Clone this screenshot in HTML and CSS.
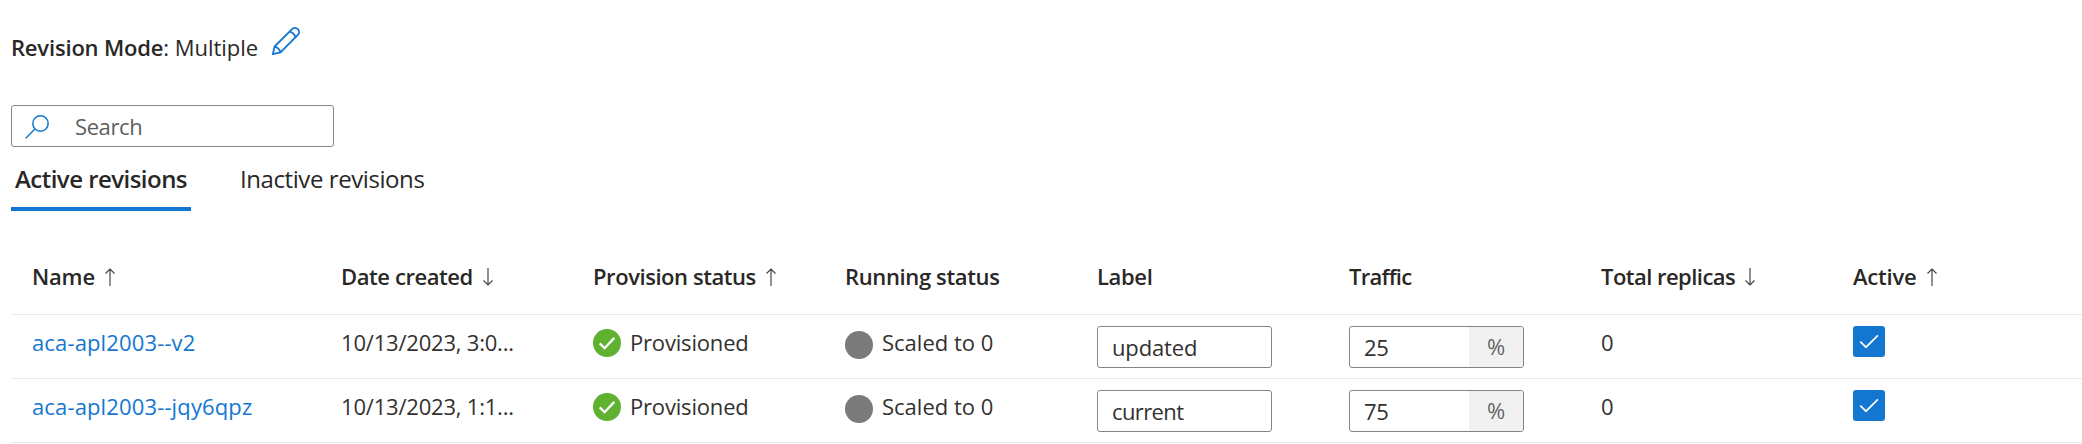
FILE: index.html
```html
<!DOCTYPE html>
<html lang="en">
<head>
<meta charset="utf-8">
<title>Revisions</title>
<link rel="stylesheet" href="styles.css">
</head>
<body>
<svg class="defs" aria-hidden="true">
  <symbol id="up" viewBox="0 0 10 18"><path d="M5 18V1M.5 5.500 5 1l4.500 4.500"/></symbol>
  <symbol id="down" viewBox="0 0 10 18"><path d="M5 0v17M.5 12.500 5 17l4.500-4.500"/></symbol>
  <symbol id="ok" viewBox="0 0 28 28"><circle cx="14" cy="14" r="14" fill="#5fb130"/><path d="M6.700 14.400l4.900 4.800L21.300 8.900" fill="none" stroke="#fff" stroke-width="2.300"/></symbol>
  <symbol id="check" viewBox="0 0 32 31"><path d="M7.300 15.600l5.700 5.600L24.900 9.400" fill="none" stroke="#fff" stroke-width="1.700"/></symbol>
</svg>
<header class="mode">
  <span class="mode-key">Revision Mode</span><span class="mode-value">: Multiple</span>
  <svg class="pencil" viewBox="0 0 30 30"><path d="M2 28l1.700-7.800L21.800 2.200a4.100 4.100 0 0 1 6 5.900L9.800 26.200zM3.700 20.200q4.800 1 6.100 6M19.300 4.700q4.700 1.200 6 6"/></svg>
</header>
<div class="search">
  <svg class="lens" viewBox="0 0 24 24"><circle cx="15.500" cy="8.500" r="7.700"/><path d="M10 14L.7 23.300"/></svg>
  <span>Search</span>
</div>
<nav class="tabs">
  <span class="tab tab-active">Active revisions</span>
  <span class="tab">Inactive revisions</span>
</nav>
<main class="table">
  <div class="row head">
    <div><span class="h-name">Name</span><svg class="sort"><use href="#up"/></svg></div>
    <div><span class="h-date">Date created</span><svg class="sort"><use href="#down"/></svg></div>
    <div><span class="h-prov">Provision status</span><svg class="sort"><use href="#up"/></svg></div>
    <div><span>Running status</span></div>
    <div><span>Label</span></div>
    <div><span class="h-traffic">Traffic</span></div>
    <div><span class="h-total">Total replicas</span><svg class="sort"><use href="#down"/></svg></div>
    <div><span class="h-active">Active</span><svg class="sort"><use href="#up"/></svg></div>
  </div>
  <div class="row">
    <div class="link">aca-apl2003--v2</div>
    <div class="date">10/13/2023, 3:0...</div>
    <div class="status"><svg class="dot"><use href="#ok"/></svg><span class="prov">Provisioned</span></div>
    <div class="status"><i class="dot gray"></i><span>Scaled to 0</span></div>
    <div class="field">updated</div>
    <div class="field traffic"><span class="num">25</span><span class="pct">%</span></div>
    <div class="count">0</div>
    <div class="box"><svg><use href="#check"/></svg></div>
  </div>
  <div class="row">
    <div class="link">aca-apl2003--jqy6qpz</div>
    <div class="date">10/13/2023, 1:1...</div>
    <div class="status"><svg class="dot"><use href="#ok"/></svg><span class="prov">Provisioned</span></div>
    <div class="status"><i class="dot gray"></i><span>Scaled to 0</span></div>
    <div class="field current">current</div>
    <div class="field traffic"><span class="num">75</span><span class="pct">%</span></div>
    <div class="count">0</div>
    <div class="box"><svg><use href="#check"/></svg></div>
  </div>
</main>
</body>
</html>
```
FILE: styles.css
```css
* { box-sizing: border-box; }
body {
  margin: 0;
  padding-left: 11px;
  height: 444px;
  overflow: hidden;
  background: #fff;
  color: #323130;
  font: 22px/30px "Open Sans", "Noto Sans", sans-serif;
}
.defs { display: none; }

.mode { display: flex; height: 105px; padding-top: 32px; color: #292827; }
.mode-key { font-weight: 600; letter-spacing: -.18px; }
.mode-value { white-space: pre; letter-spacing: -.04px; }
.pencil {
  width: 29px; height: 29px; margin: -5px 0 0 13px;
  fill: none; stroke: #1377d1; stroke-width: 1.9;
}

.search {
  display: flex; width: 323px; height: 42px; padding: 5px 0 0 13px;
  border: 1px solid #868483; border-radius: 3px;
  color: #605e5c; letter-spacing: -.4px;
}
.lens { width: 24px; height: 24px; margin: 4px 26px 0 0; fill: none; stroke: #1377d1; stroke-width: 1.5; }

.tabs { display: flex; gap: 45px; height: 64px; color: #292827; font-size: 24px; line-height: 34px; }
.tab { height: 64px; padding: 15px 4px 0; letter-spacing: -.42px; white-space: nowrap; }
.tab-active { width: 180px; border-bottom: 4px solid #1377d1; font-weight: 600; letter-spacing: -.53px; }

.row {
  display: grid;
  grid-template-columns: 309px 252px repeat(5, 252px) 1fr;
  align-items: start;
  height: 64px; padding: 12px 0 0 21px;
  border-bottom: 1px solid #eaeaea;
}
.row > div { white-space: nowrap; }
.head { height: 104px; padding-top: 50px; color: #292827; font-weight: 600; letter-spacing: -.36px; }
.head > div { display: flex; }
.h-name { letter-spacing: -.2px; }
.h-date { letter-spacing: -.42px; }
.h-prov { letter-spacing: -.44px; }
.h-traffic { letter-spacing: -.75px; }
.h-total { letter-spacing: -.53px; }
.h-active { letter-spacing: -.2px; }
.sort { width: 10px; height: 18px; margin: 7px 0 0 10px; fill: none; stroke: #484644; stroke-width: 1.2; }

.link { color: #1377d1; letter-spacing: .14px; }
.date { letter-spacing: -.2px; }
.status { display: flex; gap: 9px; }
.dot { width: 28px; height: 28px; margin-top: 2px; }
.gray { margin-top: 4px; border-radius: 50%; background: #7a7a7a; }
.prov { letter-spacing: -.18px; }
.field {
  width: 175px; height: 42px; margin-top: -1px; padding: 5px 0 0 14px;
  border: 1px solid #868483; border-radius: 3px; letter-spacing: -.15px;
}
.current { letter-spacing: -.6px; }
.traffic { display: flex; padding: 0; overflow: hidden; }
.num { width: 119px; padding: 5px 0 0 14px; letter-spacing: -.4px; }
.pct { flex: 1; padding: 4px 0 0 18px; background: #f1f1f1; color: #666; }
.box { width: 32px; height: 31px; margin-top: -1px; border-radius: 3px; background: #1377d1; }
.box svg { display: block; width: 32px; height: 31px; }
```
